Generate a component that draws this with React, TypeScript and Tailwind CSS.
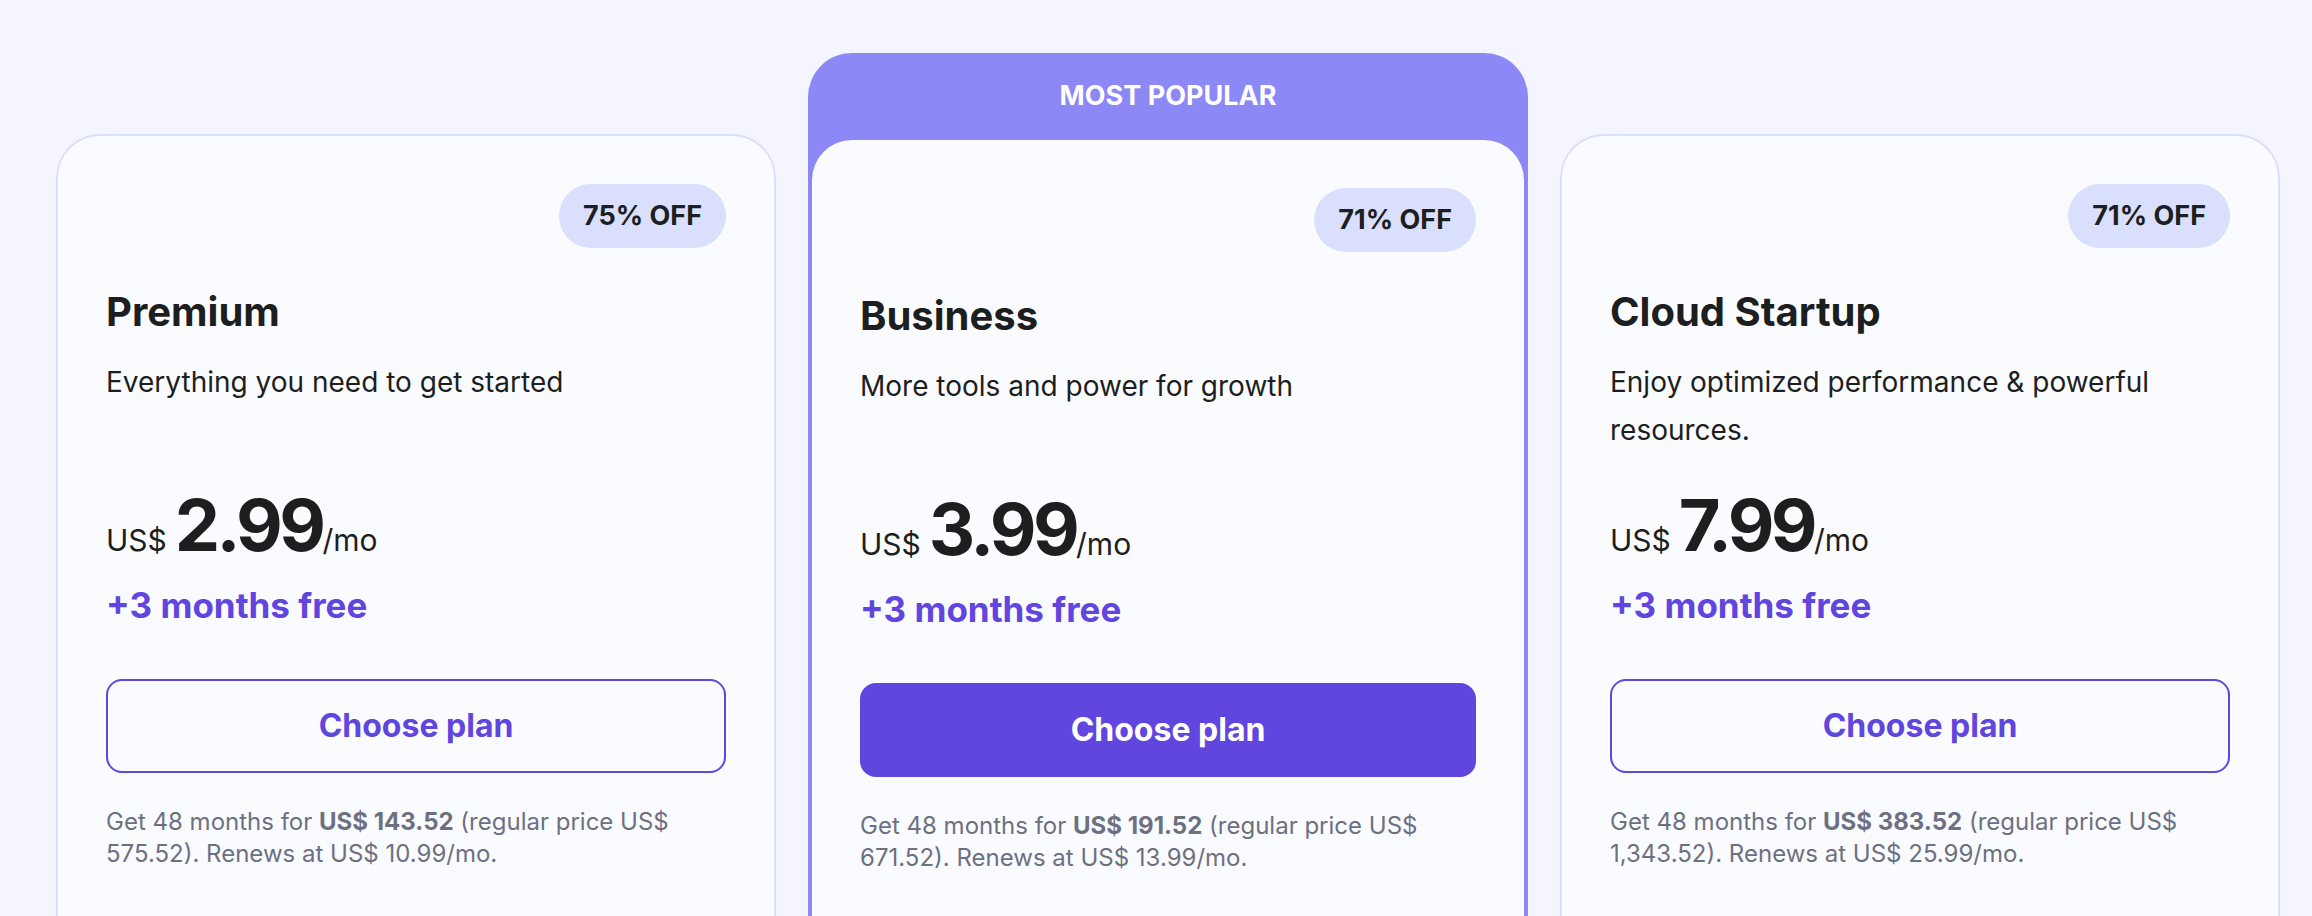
const PLANS = [
  {
    name: 'Premium',
    off: '75% OFF',
    desc: 'Everything you need to get started',
    price: '2.99',
    total: 'US$ 143.52',
    regular: '575.52',
    renews: '10.99',
    popular: false,
  },
  {
    name: 'Business',
    off: '71% OFF',
    desc: 'More tools and power for growth',
    price: '3.99',
    total: 'US$ 191.52',
    regular: '671.52',
    renews: '13.99',
    popular: true,
  },
  {
    name: 'Cloud Startup',
    off: '71% OFF',
    desc: 'Enjoy optimized performance & powerful resources.',
    price: '7.99',
    total: 'US$ 383.52',
    regular: '1,343.52',
    renews: '25.99',
    popular: false,
  },
];

type Plan = (typeof PLANS)[number];

function PlanBody({ plan }: { plan: Plan }) {
  return (
    <div className="flex flex-col">
      <div className="flex justify-end">
        <span className="flex h-[64px] items-center rounded-full bg-[#d9dffc] px-6 text-[27px] font-bold text-[#1d1e20]">
          {plan.off}
        </span>
      </div>

      <h3 className="mt-10 text-[40px] font-bold leading-[48px] text-[#1d1e20]">{plan.name}</h3>

      <p className="mt-[22px] min-h-[96px] text-[28px] leading-[48px] text-[#1d1e20]">{plan.desc}</p>

      {/* Price */}
      <div className="mt-[17px] flex h-[80px] items-baseline text-[#1d1e20]">
        <span className="text-[30px]">US$</span>
        <span className="ml-2 text-[72px] font-bold tracking-[-0.05em]">{plan.price}</span>
        <span className="text-[30px]">/mo</span>
      </div>
      <p className="mt-[34px] text-[35px] font-bold leading-[40px] text-[#6045df]">+3 months free</p>

      <button
        className={
          plan.popular
            ? 'mt-[54px] h-[94px] w-full rounded-[16px] bg-[#6045df] text-[32px] font-bold text-white'
            : 'mt-[54px] h-[94px] w-full rounded-[16px] border-2 border-[#6045df] text-[32px] font-bold text-[#6045df]'
        }
      >
        Choose plan
      </button>

      <p className="mt-[33px] text-[24px] leading-[32px] text-[#6d7081]">
        Get 48 months for <span className="font-bold">{plan.total}</span> (regular price US$ {plan.regular}). Renews at
        US$ {plan.renews}/mo.
      </p>
    </div>
  );
}

export default function App() {
  return (
    <div className="h-[916px] overflow-hidden bg-[#f4f5ff] font-['Inter',sans-serif]">
      <div className="flex items-start gap-8 pl-[56px] pr-8 pt-[53px]">
        {PLANS.map((plan) =>
          plan.popular ? (
            <div key={plan.name} className="w-[720px] shrink-0 rounded-t-[44px] bg-[#8c88f6] px-1">
              <div className="flex h-[87px] items-center justify-center text-[27px] font-bold uppercase text-white">
                Most popular
              </div>
              <div className="min-h-[900px] rounded-t-[40px] bg-[#fafbff] p-12">
                <PlanBody plan={plan} />
              </div>
            </div>
          ) : (
            <div
              key={plan.name}
              className="mt-[81px] min-h-[900px] w-[720px] shrink-0 rounded-[44px] border-2 border-[#d9dffc] bg-[#fafbff] p-12"
            >
              <PlanBody plan={plan} />
            </div>
          ),
        )}
      </div>
    </div>
  );
}
